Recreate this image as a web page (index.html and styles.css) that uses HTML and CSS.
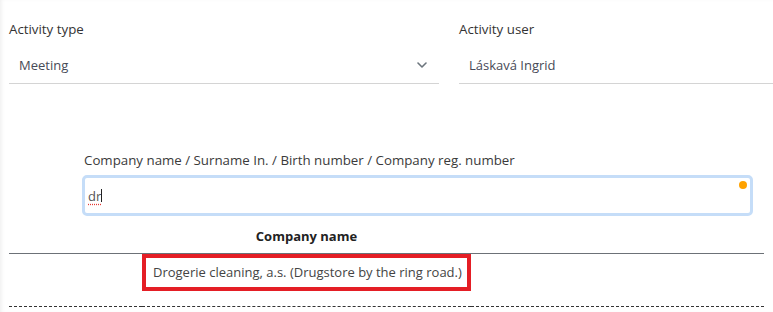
FILE: index.html
```html
<!DOCTYPE html>
<html>
<head>
<meta charset="utf-8">
<link rel="stylesheet" href="styles.css">
</head>
<body>
<div class="page">
  <div class="top-row">
    <div class="field field-type">
      <div class="lbl">Activity type</div>
      <div class="select">
        <span class="val">Meeting</span>
        <svg class="chev" width="10" height="6" viewBox="0 0 10 6"><path d="M1 1 L5 5 L9 1" fill="none" stroke="#6c757d" stroke-width="1.6" stroke-linecap="round" stroke-linejoin="round"/></svg>
      </div>
    </div>
    <div class="field field-user">
      <div class="lbl">Activity user</div>
      <div class="select"><span class="val">Láskavá Ingrid</span></div>
    </div>
  </div>

  <div class="search">
    <div class="lbl">Company name / Surname In. / Birth number / Company reg. number</div>
    <div class="input">
      <span class="typed">dr</span><span class="caret"></span>
      <span class="dot"></span>
    </div>
  </div>

  <table class="results">
    <colgroup><col class="c0"><col class="c1"><col class="c2"></colgroup>
    <thead>
      <tr><th></th><th>Company name</th><th></th></tr>
    </thead>
    <tbody>
      <tr>
        <td></td>
        <td class="hit"><span class="mark">Drogerie cleaning, a.s. (Drugstore by the ring road.)</span></td>
        <td></td>
      </tr>
    </tbody>
  </table>
</div>
</body>
</html>
```
FILE: styles.css
```css
html, body {
  margin: 0;
  padding: 0;
  background: #fff;
  overflow: hidden;
}
body {
  font-family: "Open Sans", "Liberation Sans", sans-serif;
  font-size: 13px;
  color: #333;
  box-shadow: inset 3px 0 4px -2px #ececec;
  height: 312px;
}
.page {
  padding: 20px 0 0 9px;
}
.top-row {
  display: flex;
  gap: 20px;
}
.field-type {
  width: 430px;
  flex: none;
}
.field-user {
  flex: 1;
}
.lbl {
  line-height: 18px;
  font-size: 13.3px;
  color: #333;
}
.select {
  margin-top: 8px;
  height: 37px;
  border-bottom: 1px solid #d4d4d4;
  display: flex;
  align-items: center;
  padding: 0 12px 0 10px;
}
.val {
  flex: 1;
  color: #474a57;
}
.chev {
  display: block;
}
.search {
  margin: 67px 0 0 73px;
  width: 671px;
}
.search .lbl {
  padding-left: 2px;
  color: #3a3a3a;
}
.input {
  margin-top: 6px;
  height: 35px;
  border: 3px solid #c5ddf8;
  border-radius: 5px;
  display: flex;
  align-items: center;
  padding: 0 3px;
  position: relative;
}
.typed {
  color: #555;
  text-decoration: underline dotted #e53935;
  text-underline-offset: 3px;
}
.caret {
  width: 1px;
  height: 13px;
  background: #222;
}
.dot {
  position: absolute;
  right: 3px;
  top: 3px;
  width: 8px;
  height: 8px;
  border-radius: 50%;
  background: #ffa200;
}
.results {
  width: calc(100% - 9px);
  border-collapse: collapse;
  table-layout: fixed;
}
.c0 { width: 133px; }
.c1 { width: 329px; }
.results th {
  font-weight: 700;
  color: #222;
  padding: 12px 0 8px;
  line-height: 17px;
  border-bottom: 1px solid #6c7177;
  text-align: center;
}
.results td {
  padding: 0 0 15px;
  border-bottom: 1px dashed #333;
  vertical-align: top;
}
.mark {
  display: block;
  border: 4px solid #e41e25;
  padding: 6px 7px;
  line-height: 17px;
  color: #444;
  white-space: nowrap;
}
```
